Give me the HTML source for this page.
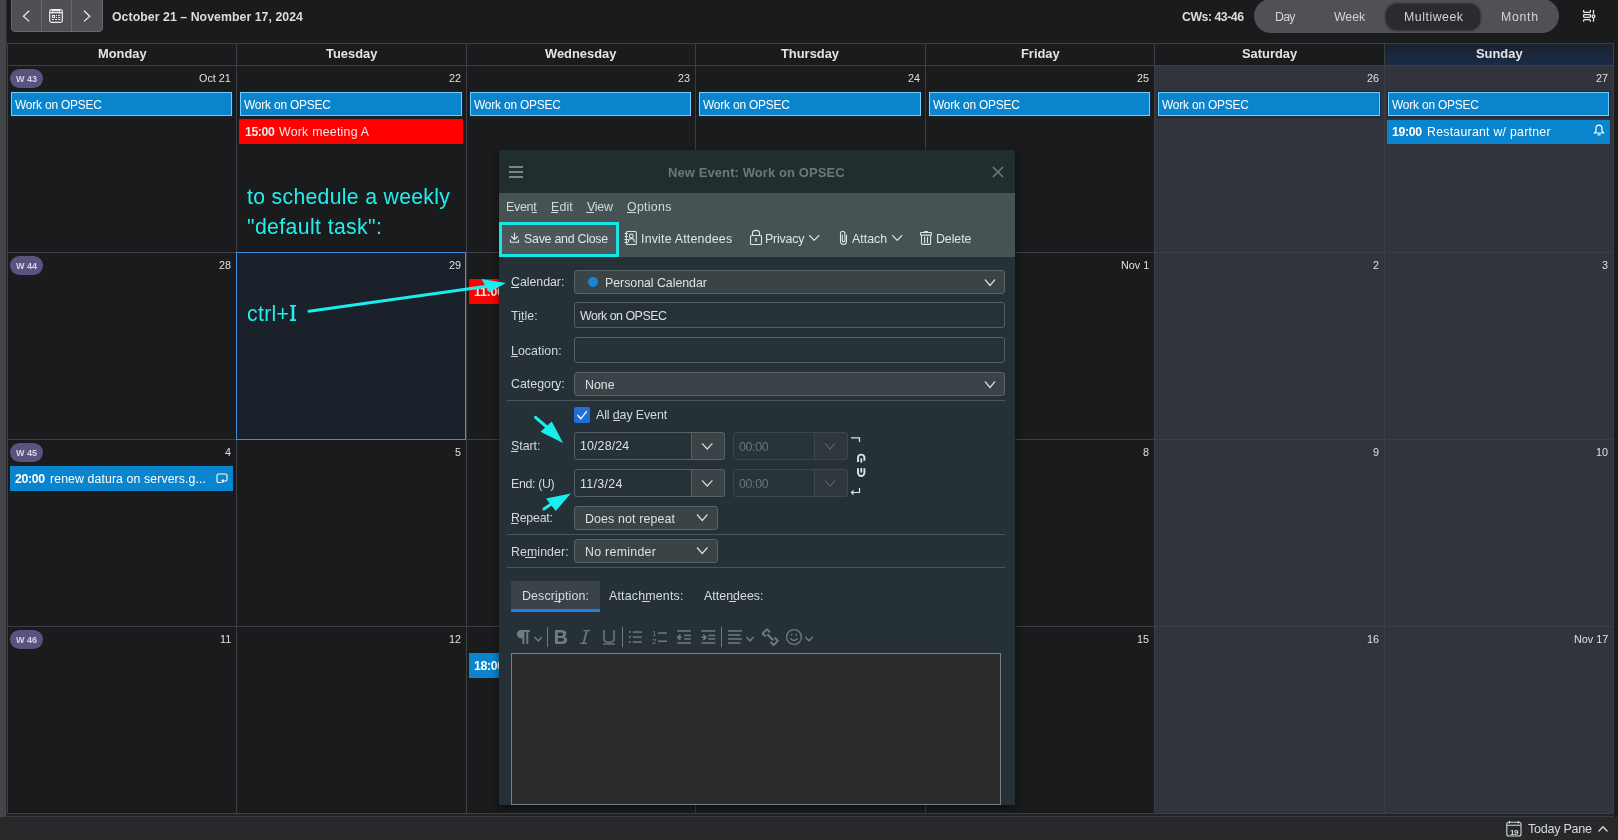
<!DOCTYPE html>
<html><head><meta charset="utf-8"><title>Calendar</title>
<style>
html,body{margin:0;padding:0;}
body{-webkit-font-smoothing:antialiased;width:1618px;height:840px;overflow:hidden;position:relative;background:#1a1b1d;font-family:"Liberation Sans",sans-serif;}
.t{position:absolute;white-space:pre;line-height:1;will-change:transform;}
.r{position:absolute;box-sizing:border-box;}
svg{position:absolute;overflow:visible;}
</style></head><body>
<div class="r" style="left:0px;top:0px;width:6px;height:817px;background:#444548;"></div>
<div class="r" style="left:6px;top:0px;width:1px;height:817px;background:#2a2b2d;"></div>
<div class="r" style="left:0px;top:817px;width:1618px;height:23px;background:#27282a;"></div>
<div class="r" style="left:1155px;top:66px;width:458px;height:747px;background:#31343d;"></div>
<div class="r" style="left:1385px;top:44px;width:228px;height:21px;background:linear-gradient(#1b222d,#1a2b47);"></div>
<div class="r" style="left:7px;top:816px;width:1607px;height:1px;background:#3a3b3e;"></div>
<div class="r" style="left:7px;top:814px;width:1607px;height:2px;background:#222325;"></div>
<div class="r" style="left:7px;top:43px;width:1px;height:771px;background:#3d3e42;"></div>
<div class="r" style="left:236px;top:43px;width:1px;height:771px;background:#3d3e42;"></div>
<div class="r" style="left:466px;top:43px;width:1px;height:771px;background:#3d3e42;"></div>
<div class="r" style="left:695px;top:43px;width:1px;height:771px;background:#3d3e42;"></div>
<div class="r" style="left:925px;top:43px;width:1px;height:771px;background:#3d3e42;"></div>
<div class="r" style="left:1154px;top:43px;width:1px;height:771px;background:#3d3e42;"></div>
<div class="r" style="left:1384px;top:43px;width:1px;height:771px;background:#3d3e42;"></div>
<div class="r" style="left:1613px;top:43px;width:1px;height:771px;background:#3d3e42;"></div>
<div class="r" style="left:7px;top:43px;width:1607px;height:1px;background:#3d3e42;"></div>
<div class="r" style="left:7px;top:65px;width:1607px;height:1px;background:#3d3e42;"></div>
<div class="r" style="left:7px;top:252px;width:1607px;height:1px;background:#3d3e42;"></div>
<div class="r" style="left:7px;top:439px;width:1607px;height:1px;background:#3d3e42;"></div>
<div class="r" style="left:7px;top:626px;width:1607px;height:1px;background:#3d3e42;"></div>
<div class="r" style="left:7px;top:813px;width:1607px;height:1px;background:#3d3e42;"></div>
<div class="r" style="left:11px;top:-4px;width:92px;height:36px;background:#504f54;border:1px solid #68676c;border-radius:4px;"></div>
<div class="r" style="left:41px;top:0px;width:1px;height:32px;background:#6a696e;"></div>
<div class="r" style="left:71px;top:0px;width:1px;height:32px;background:#6a696e;"></div>
<svg style="left:0;top:0" width="1618" height="40"><g fill="none" stroke="#ececec" stroke-width="1.2"><path d="M29.2 10.8 L23.4 16.2 L29.2 21.4"/><path d="M84 10.8 L89.8 16.2 L84 21.4"/><rect x="49.7" y="9.6" width="12.6" height="12.8" rx="1.8"/><path d="M50 12.6 H62 M51.8 10.6 H60.2"/><path d="M52.5 11.2 V13.6 M59.4 11.2 V13.6"/><rect x="52.4" y="15.5" width="2.2" height="1.9" stroke-width="1"/></g><g fill="#ececec"><rect x="56" y="14.9" width="1" height="1"/><rect x="56" y="17" width="1" height="1"/><rect x="58.2" y="14.9" width="2" height="1"/><rect x="58.2" y="17" width="2" height="1"/><rect x="52" y="19" width="2" height="1"/><rect x="55" y="19" width="2" height="1"/><rect x="58.2" y="19" width="2" height="1"/></g></svg>
<div class="t" style="left:112.00px;top:11px;font-size:12.30px;font-weight:700;color:#dcdcdd;letter-spacing:0.056px;">October 21 – November 17, 2024</div>
<div class="t" style="left:1182.00px;top:11px;font-size:12.30px;font-weight:700;color:#dcdcdd;letter-spacing:-0.477px;">CWs: 43-46</div>
<div class="r" style="left:1254px;top:-1px;width:305px;height:34px;background:#515055;border-radius:17px;"></div>
<div class="r" style="left:1386px;top:4px;width:94px;height:26px;background:#2a2b30;border-radius:11px;box-shadow:0 0 2px 1px rgba(30,31,35,0.6);"></div>
<div class="t" style="left:1274.50px;top:11px;font-size:12.30px;font-weight:400;color:#d4d4d6;letter-spacing:-0.682px;">Day</div>
<div class="t" style="left:1333.50px;top:11px;font-size:12.30px;font-weight:400;color:#d4d4d6;letter-spacing:-0.014px;">Week</div>
<div class="t" style="left:1403.50px;top:11px;font-size:12.30px;font-weight:400;color:#d4d4d6;letter-spacing:0.537px;">Multiweek</div>
<div class="t" style="left:1501.00px;top:11px;font-size:12.30px;font-weight:400;color:#d4d4d6;letter-spacing:0.701px;">Month</div>
<svg style="left:0;top:0" width="1618" height="40"><g fill="none" stroke="#e6e6e6" stroke-width="1.3"><path d="M1583.6 10 V11.4 Q1583.6 12.4 1584.6 12.4 H1589.4 Q1590.4 12.4 1590.4 11.4 V10 M1583.6 21.8 V20.6 Q1583.6 19.6 1584.6 19.6 H1589.4 Q1590.4 19.6 1590.4 20.6 V21.8 M1593.5 10 V13.8 M1593.5 17.7 V21.8"/><rect x="1583.6" y="14.6" width="6.8" height="2.8" rx="0.8"/><circle cx="1593.5" cy="16.2" r="1.4"/></g></svg>
<div class="t" style="left:97.64px;top:48px;font-size:12.90px;font-weight:700;color:#e4e4e6;">Monday</div>
<div class="t" style="left:325.81px;top:48px;font-size:12.90px;font-weight:700;color:#e4e4e6;">Tuesday</div>
<div class="t" style="left:545.27px;top:48px;font-size:12.90px;font-weight:700;color:#e4e4e6;">Wednesday</div>
<div class="t" style="left:781.48px;top:48px;font-size:12.90px;font-weight:700;color:#e4e4e6;">Thursday</div>
<div class="t" style="left:1020.65px;top:48px;font-size:12.90px;font-weight:700;color:#e4e4e6;">Friday</div>
<div class="t" style="left:1241.89px;top:48px;font-size:12.90px;font-weight:700;color:#e4e4e6;">Saturday</div>
<div class="t" style="left:1475.70px;top:48px;font-size:12.90px;font-weight:700;color:#e4e4e6;">Sunday</div>
<div class="r" style="left:236px;top:252px;width:230px;height:188px;background:#1a212b;border:1px solid #3d8fe0;"></div>
<div class="t" style="left:199.19px;top:73px;font-size:10.80px;font-weight:400;color:#e0e0e2;">Oct 21</div>
<div class="t" style="left:448.99px;top:73px;font-size:10.80px;font-weight:400;color:#e0e0e2;">22</div>
<div class="t" style="left:677.99px;top:73px;font-size:10.80px;font-weight:400;color:#e0e0e2;">23</div>
<div class="t" style="left:907.99px;top:73px;font-size:10.80px;font-weight:400;color:#e0e0e2;">24</div>
<div class="t" style="left:1136.98px;top:73px;font-size:10.80px;font-weight:400;color:#e0e0e2;">25</div>
<div class="t" style="left:1366.98px;top:73px;font-size:10.80px;font-weight:400;color:#e0e0e2;">26</div>
<div class="t" style="left:1595.98px;top:73px;font-size:10.80px;font-weight:400;color:#e0e0e2;">27</div>
<div class="r" style="left:10px;top:69px;width:33px;height:19px;background:#5a5380;border-radius:10px;"></div>
<div class="t" style="left:15.99px;top:75px;font-size:9.00px;font-weight:700;color:#d6d2e4;">W 43</div>
<div class="t" style="left:218.99px;top:260px;font-size:10.80px;font-weight:400;color:#e0e0e2;">28</div>
<div class="t" style="left:448.99px;top:260px;font-size:10.80px;font-weight:400;color:#e0e0e2;">29</div>
<div class="t" style="left:677.99px;top:260px;font-size:10.80px;font-weight:400;color:#e0e0e2;">30</div>
<div class="t" style="left:907.99px;top:260px;font-size:10.80px;font-weight:400;color:#e0e0e2;">31</div>
<div class="t" style="left:1120.79px;top:260px;font-size:10.80px;font-weight:400;color:#e0e0e2;">Nov 1</div>
<div class="t" style="left:1373.01px;top:260px;font-size:10.80px;font-weight:400;color:#e0e0e2;">2</div>
<div class="t" style="left:1602.01px;top:260px;font-size:10.80px;font-weight:400;color:#e0e0e2;">3</div>
<div class="r" style="left:10px;top:256px;width:33px;height:19px;background:#5a5380;border-radius:10px;"></div>
<div class="t" style="left:15.99px;top:262px;font-size:9.00px;font-weight:700;color:#d6d2e4;">W 44</div>
<div class="t" style="left:225.01px;top:447px;font-size:10.80px;font-weight:400;color:#e0e0e2;">4</div>
<div class="t" style="left:455.01px;top:447px;font-size:10.80px;font-weight:400;color:#e0e0e2;">5</div>
<div class="t" style="left:684.01px;top:447px;font-size:10.80px;font-weight:400;color:#e0e0e2;">6</div>
<div class="t" style="left:914.01px;top:447px;font-size:10.80px;font-weight:400;color:#e0e0e2;">7</div>
<div class="t" style="left:1143.01px;top:447px;font-size:10.80px;font-weight:400;color:#e0e0e2;">8</div>
<div class="t" style="left:1373.01px;top:447px;font-size:10.80px;font-weight:400;color:#e0e0e2;">9</div>
<div class="t" style="left:1595.98px;top:447px;font-size:10.80px;font-weight:400;color:#e0e0e2;">10</div>
<div class="r" style="left:10px;top:443px;width:33px;height:19px;background:#5a5380;border-radius:10px;"></div>
<div class="t" style="left:15.99px;top:449px;font-size:9.00px;font-weight:700;color:#d6d2e4;">W 45</div>
<div class="t" style="left:219.79px;top:634px;font-size:10.80px;font-weight:400;color:#e0e0e2;">11</div>
<div class="t" style="left:448.99px;top:634px;font-size:10.80px;font-weight:400;color:#e0e0e2;">12</div>
<div class="t" style="left:677.99px;top:634px;font-size:10.80px;font-weight:400;color:#e0e0e2;">13</div>
<div class="t" style="left:907.99px;top:634px;font-size:10.80px;font-weight:400;color:#e0e0e2;">14</div>
<div class="t" style="left:1136.98px;top:634px;font-size:10.80px;font-weight:400;color:#e0e0e2;">15</div>
<div class="t" style="left:1366.98px;top:634px;font-size:10.80px;font-weight:400;color:#e0e0e2;">16</div>
<div class="t" style="left:1573.79px;top:634px;font-size:10.80px;font-weight:400;color:#e0e0e2;">Nov 17</div>
<div class="r" style="left:10px;top:630px;width:33px;height:19px;background:#5a5380;border-radius:10px;"></div>
<div class="t" style="left:15.99px;top:636px;font-size:9.00px;font-weight:700;color:#d6d2e4;">W 46</div>
<div class="r" style="left:10px;top:91px;width:223px;height:27px;border:1px solid rgba(8,40,70,0.8);"></div>
<div class="r" style="left:11px;top:92px;width:221px;height:24px;background:#0a84cc;border:1px solid #72ccff;"></div>
<div class="t" style="left:15.30px;top:100px;font-size:11.90px;font-weight:400;color:#ffffff;letter-spacing:-0.173px;">Work on OPSEC</div>
<div class="r" style="left:239px;top:91px;width:224px;height:27px;border:1px solid rgba(8,40,70,0.8);"></div>
<div class="r" style="left:240px;top:92px;width:222px;height:24px;background:#0a84cc;border:1px solid #72ccff;"></div>
<div class="t" style="left:244.30px;top:100px;font-size:11.90px;font-weight:400;color:#ffffff;letter-spacing:-0.173px;">Work on OPSEC</div>
<div class="r" style="left:469px;top:91px;width:223px;height:27px;border:1px solid rgba(8,40,70,0.8);"></div>
<div class="r" style="left:470px;top:92px;width:221px;height:24px;background:#0a84cc;border:1px solid #72ccff;"></div>
<div class="t" style="left:474.30px;top:100px;font-size:11.90px;font-weight:400;color:#ffffff;letter-spacing:-0.173px;">Work on OPSEC</div>
<div class="r" style="left:698px;top:91px;width:224px;height:27px;border:1px solid rgba(8,40,70,0.8);"></div>
<div class="r" style="left:699px;top:92px;width:222px;height:24px;background:#0a84cc;border:1px solid #72ccff;"></div>
<div class="t" style="left:703.30px;top:100px;font-size:11.90px;font-weight:400;color:#ffffff;letter-spacing:-0.173px;">Work on OPSEC</div>
<div class="r" style="left:928px;top:91px;width:223px;height:27px;border:1px solid rgba(8,40,70,0.8);"></div>
<div class="r" style="left:929px;top:92px;width:221px;height:24px;background:#0a84cc;border:1px solid #72ccff;"></div>
<div class="t" style="left:933.30px;top:100px;font-size:11.90px;font-weight:400;color:#ffffff;letter-spacing:-0.173px;">Work on OPSEC</div>
<div class="r" style="left:1157px;top:91px;width:224px;height:27px;border:1px solid rgba(8,40,70,0.8);"></div>
<div class="r" style="left:1158px;top:92px;width:222px;height:24px;background:#0a84cc;border:1px solid #72ccff;"></div>
<div class="t" style="left:1162.30px;top:100px;font-size:11.90px;font-weight:400;color:#ffffff;letter-spacing:-0.173px;">Work on OPSEC</div>
<div class="r" style="left:1387px;top:91px;width:223px;height:27px;border:1px solid rgba(8,40,70,0.8);"></div>
<div class="r" style="left:1388px;top:92px;width:221px;height:24px;background:#0a84cc;border:1px solid #72ccff;"></div>
<div class="t" style="left:1392.30px;top:100px;font-size:11.90px;font-weight:400;color:#ffffff;letter-spacing:-0.173px;">Work on OPSEC</div>
<div class="r" style="left:239px;top:119px;width:224px;height:25px;background:#ff0000;"></div>
<div class="t" style="left:245.00px;top:126px;font-size:12.30px;font-weight:700;color:#f6e8e8;letter-spacing:-0.414px;">15:00</div>
<div class="t" style="left:279.40px;top:126px;font-size:12.30px;font-weight:400;color:#f6e8e8;letter-spacing:0.262px;">Work meeting A</div>
<div class="r" style="left:1387px;top:120px;width:223px;height:24px;background:#0a84cc;"></div>
<div class="t" style="left:1392.00px;top:126px;font-size:12.30px;font-weight:700;color:#ffffff;letter-spacing:-0.364px;">19:00</div>
<div class="t" style="left:1426.80px;top:126px;font-size:12.30px;font-weight:400;color:#ffffff;letter-spacing:0.262px;">Restaurant w/ partner</div>
<svg style="left:0;top:0" width="1618" height="840"><g fill="none" stroke="#ffffff" stroke-width="1.2"><path d="M1594.5 133 H1603.5 L1602 131 V128.5 A3 3.3 0 0 0 1596 128.5 V131 Z"/><path d="M1597.5 134.8 H1600.5"/></g></svg>
<div class="r" style="left:469px;top:279px;width:40px;height:25px;background:#ff0000;"></div>
<div class="t" style="left:474.00px;top:286px;font-size:12.30px;font-weight:700;color:#f6e8e8;letter-spacing:-0.195px;">11:00</div>
<div class="r" style="left:10px;top:466px;width:223px;height:25px;background:#0a84cc;"></div>
<div class="t" style="left:14.90px;top:473px;font-size:12.30px;font-weight:700;color:#ffffff;letter-spacing:-0.364px;">20:00</div>
<div class="t" style="left:50.00px;top:473px;font-size:12.30px;font-weight:400;color:#ffffff;letter-spacing:0.106px;">renew datura on servers.g...</div>
<svg style="left:0;top:0" width="1618" height="840"><g fill="none" stroke="#ffffff" stroke-width="1.1"><path d="M221.5 482.5 H218.5 A1.5 1.5 0 0 1 217 481 V475.5 A1.5 1.5 0 0 1 218.5 474 H225.5 A1.5 1.5 0 0 1 227 475.5 V479.5 A1.5 1.5 0 0 1 225.5 481 H222.5 M223.5 479.5 L222 481 L223.5 482.5"/></g></svg>
<div class="r" style="left:469px;top:653px;width:40px;height:25px;background:#0a84cc;"></div>
<div class="t" style="left:474.00px;top:660px;font-size:12.30px;font-weight:700;color:#ffffff;letter-spacing:-0.364px;">18:00</div>
<div class="t" style="left:246.80px;top:186px;font-size:21.20px;font-weight:400;color:#22efec;letter-spacing:0.327px;">to schedule a weekly</div>
<div class="t" style="left:246.80px;top:216px;font-size:21.20px;font-weight:400;color:#22efec;letter-spacing:0.402px;">&quot;default task&quot;:</div>
<div class="t" style="left:246.60px;top:303px;font-size:21.20px;font-weight:400;color:#22efec;letter-spacing:0.337px;">ctrl+</div>
<svg style="left:0;top:0" width="1618" height="840"><path d="M290 305 H296 V306.6 H294.3 V319.3 H296 V321 H290 V319.3 H291.7 V306.6 H290 Z" fill="#22efec"/></svg>
<div class="t" style="left:1527.60px;top:823px;font-size:12.60px;font-weight:400;color:#d6d9da;letter-spacing:-0.273px;">Today Pane</div>
<svg style="left:0;top:0" width="1618" height="840"><g fill="none" stroke="#d6d9da" stroke-width="1.1"><rect x="1506.8" y="822.2" width="14.2" height="13.8" rx="2"/><path d="M1507 825.3 H1520.8 M1509.5 821 V823.5 M1518.3 821 V823.5"/><path d="M1598.5 831.5 L1603 826.8 L1607.5 831.5" stroke-width="1.3"/></g></svg>
<div class="t" style="left:1510.00px;top:829px;font-size:8.00px;font-weight:700;color:#d6d9da;letter-spacing:-0.400px;">19</div>
<div class="r" style="left:499px;top:150px;width:516px;height:655px;box-shadow:0 3px 7px 1px rgba(0,0,0,0.42);"></div>
<div class="r" style="left:499px;top:150px;width:516px;height:655px;background:#253137;border-radius:3px 3px 0 0;overflow:hidden;"></div>
<div class="r" style="left:499px;top:150px;width:516px;height:43px;background:#212e30;border-radius:3px 3px 0 0;"></div>
<div class="t" style="left:668.40px;top:166px;font-size:13.00px;font-weight:700;color:#6c797b;letter-spacing:0.089px;">New Event: Work on OPSEC</div>
<svg style="left:0;top:0" width="1618" height="840"><g fill="#7a8486"><rect x="509" y="166" width="14" height="2"/><rect x="509" y="171" width="14" height="2"/><rect x="509" y="176" width="14" height="2"/></g><g stroke="#6f7a7b" stroke-width="1.6" fill="none"><path d="M993 167 L1003 177 M1003 167 L993 177"/></g></svg>
<div class="r" style="left:499px;top:193px;width:516px;height:64px;background:#465355;"></div>
<div class="t" style="left:506.00px;top:201px;font-size:12.40px;font-weight:400;color:#d3d9da;letter-spacing:-0.253px;">Event</div>
<div class="r" style="left:532px;top:212px;width:5px;height:1px;background:#d3d9da;"></div>
<div class="t" style="left:551.00px;top:201px;font-size:12.40px;font-weight:400;color:#d3d9da;letter-spacing:0.147px;">Edit</div>
<div class="r" style="left:551px;top:212px;width:7px;height:1px;background:#d3d9da;"></div>
<div class="t" style="left:586.80px;top:201px;font-size:12.40px;font-weight:400;color:#d3d9da;letter-spacing:-0.230px;">View</div>
<div class="r" style="left:586px;top:212px;width:8px;height:1px;background:#d3d9da;"></div>
<div class="t" style="left:626.80px;top:201px;font-size:12.40px;font-weight:400;color:#d3d9da;letter-spacing:0.275px;">Options</div>
<div class="r" style="left:627px;top:212px;width:9px;height:1px;background:#d3d9da;"></div>
<div class="r" style="left:502px;top:225px;width:114px;height:30px;background:#4d575a;"></div>
<div class="r" style="left:499px;top:222px;width:120px;height:35px;border:3px solid #14e6e6;"></div>
<div class="t" style="left:524.00px;top:233px;font-size:12.40px;font-weight:400;color:#dfe5e6;letter-spacing:-0.257px;">Save and Close</div>
<div class="t" style="left:641.00px;top:233px;font-size:12.40px;font-weight:400;color:#dfe5e6;letter-spacing:0.196px;">Invite Attendees</div>
<div class="t" style="left:765.30px;top:233px;font-size:12.40px;font-weight:400;color:#dfe5e6;letter-spacing:-0.207px;">Privacy</div>
<div class="t" style="left:851.90px;top:233px;font-size:12.40px;font-weight:400;color:#dfe5e6;letter-spacing:0.009px;">Attach</div>
<div class="t" style="left:935.60px;top:233px;font-size:12.40px;font-weight:400;color:#dfe5e6;letter-spacing:-0.087px;">Delete</div>
<svg style="left:0;top:0" width="1618" height="840"><g fill="none" stroke="#dfe5e6" stroke-width="1.1" stroke-linecap="round" stroke-linejoin="round"><path d="M514.5 233 V239.5 M511.5 236.5 L514.5 239.5 L517.5 236.5 M510.5 240 V242.3 H518.5 V240"/><rect x="626.3" y="231.5" width="10" height="13" rx="1"/><path d="M625 233.5 H627.5 M625 236.5 H627.5 M625 239.5 H627.5 M625 242.5 H627.5"/><circle cx="631.3" cy="236" r="1.9"/><path d="M628.5 241.8 V240.6 Q628.5 238.6 631.3 238.6 Q634.1 238.6 634.1 240.6 V241.8"/><rect x="750.5" y="235.5" width="11" height="9" rx="1"/><path d="M752.5 235.5 V233 Q752.5 230.4 756 230.4 Q759.5 230.4 759.5 233 V235.5"/><path d="M756 238.5 V241" stroke-width="1.4"/><path d="M809.5 235.5 L814.2 240.3 L818.9 235.5"/><path d="M846.5 235 V241 Q846.5 244.4 843.5 244.4 Q840.5 244.4 840.5 241 V234 Q840.5 231.3 842.7 231.3 Q844.9 231.3 844.9 234 V240.5 Q844.9 241.8 843.6 241.8 Q842.3 241.8 842.3 240.5 V235"/><path d="M892.6 235.5 L897.2 240.3 L901.8 235.5"/><rect x="920.5" y="232.5" width="11" height="2.6" rx="0.8"/><path d="M924.5 232.5 V231.5 H927.5 V232.5"/><path d="M921.5 235.3 V243.6 Q921.5 244.4 922.3 244.4 H929.8 Q930.6 244.4 930.6 243.6 V235.3 M924.6 237 V242.5 M927.5 237 V242.5"/></g></svg>
<div class="t" style="left:511.30px;top:276px;font-size:12.40px;font-weight:400;color:#d3d9da;letter-spacing:-0.044px;">Calendar:</div>
<div class="r" style="left:511px;top:287px;width:8px;height:1px;background:#d3d9da;"></div>
<div class="r" style="left:574px;top:270px;width:431px;height:24px;background:#3a4447;border:1px solid #596468;border-radius:3px;"></div>
<svg style="left:0;top:0" width="1618" height="840"><circle cx="593" cy="282" r="5" fill="#1a84d6"/></svg>
<div class="t" style="left:604.70px;top:277px;font-size:12.40px;font-weight:400;color:#dbe0e1;letter-spacing:-0.044px;">Personal Calendar</div>
<div class="t" style="left:511.30px;top:310px;font-size:12.40px;font-weight:400;color:#d3d9da;letter-spacing:0.058px;">Title:</div>
<div class="r" style="left:519px;top:321px;width:4px;height:1px;background:#d3d9da;"></div>
<div class="r" style="left:574px;top:302px;width:431px;height:26px;background:#273237;border:1px solid #566166;border-radius:3px;"></div>
<div class="t" style="left:579.70px;top:310px;font-size:12.40px;font-weight:400;color:#dbe0e1;letter-spacing:-0.485px;">Work on OPSEC</div>
<div class="t" style="left:511.30px;top:345px;font-size:12.40px;font-weight:400;color:#d3d9da;letter-spacing:0.045px;">Location:</div>
<div class="r" style="left:511px;top:356px;width:7px;height:1px;background:#d3d9da;"></div>
<div class="r" style="left:574px;top:337px;width:431px;height:26px;background:#273237;border:1px solid #566166;border-radius:3px;"></div>
<div class="t" style="left:511.30px;top:378px;font-size:12.40px;font-weight:400;color:#d3d9da;letter-spacing:-0.007px;">Category:</div>
<div class="r" style="left:553px;top:389px;width:6px;height:1px;background:#d3d9da;"></div>
<div class="r" style="left:574px;top:372px;width:431px;height:24px;background:#3a4447;border:1px solid #596468;border-radius:3px;"></div>
<div class="t" style="left:584.70px;top:379px;font-size:12.40px;font-weight:400;color:#dbe0e1;letter-spacing:-0.012px;">None</div>
<div class="r" style="left:507px;top:400px;width:498px;height:1px;background:#4a555a;"></div>
<div class="r" style="left:574px;top:407px;width:16px;height:16px;background:#1f6fd6;border-radius:2px;"></div>
<svg style="left:0;top:0" width="1618" height="840"><path d="M577.5 415 L580.8 418.8 L586.8 411.2" fill="none" stroke="#ffffff" stroke-width="1.3"/></svg>
<div class="t" style="left:596.30px;top:409px;font-size:12.40px;font-weight:400;color:#d3d9da;letter-spacing:-0.099px;">All day Event</div>
<div class="r" style="left:613px;top:420px;width:7px;height:1px;background:#d3d9da;"></div>
<div class="t" style="left:511.30px;top:440px;font-size:12.40px;font-weight:400;color:#d3d9da;letter-spacing:-0.027px;">Start:</div>
<div class="r" style="left:511px;top:451px;width:7px;height:1px;background:#d3d9da;"></div>
<div class="r" style="left:574px;top:432px;width:151px;height:28px;background:#273237;border:1px solid #566166;border-radius:3px;"></div>
<div class="r" style="left:691px;top:432px;width:34px;height:28px;background:#3a4447;border:1px solid #566166;border-left:1px solid #566166;border-radius:0 3px 3px 0;"></div>
<div class="t" style="left:580.00px;top:440px;font-size:12.40px;font-weight:400;color:#dbe0e1;letter-spacing:0.133px;">10/28/24</div>
<div class="r" style="left:733px;top:432px;width:115px;height:28px;background:#29333a;border:1px solid #3c464c;border-radius:3px;"></div>
<div class="r" style="left:814px;top:432px;width:34px;height:28px;background:#2d373c;border:1px solid #3c464c;border-radius:0 3px 3px 0;"></div>
<div class="t" style="left:738.70px;top:441px;font-size:12.40px;font-weight:400;color:#6b7477;letter-spacing:-0.333px;">00:00</div>
<div class="t" style="left:511.30px;top:478px;font-size:12.40px;font-weight:400;color:#d3d9da;letter-spacing:-0.351px;">End: (U)</div>
<div class="r" style="left:574px;top:469px;width:151px;height:28px;background:#273237;border:1px solid #566166;border-radius:3px;"></div>
<div class="r" style="left:691px;top:469px;width:34px;height:28px;background:#3a4447;border:1px solid #566166;border-left:1px solid #566166;border-radius:0 3px 3px 0;"></div>
<div class="t" style="left:580.00px;top:478px;font-size:12.40px;font-weight:400;color:#dbe0e1;letter-spacing:0.341px;">11/3/24</div>
<div class="r" style="left:733px;top:469px;width:115px;height:28px;background:#29333a;border:1px solid #3c464c;border-radius:3px;"></div>
<div class="r" style="left:814px;top:469px;width:34px;height:28px;background:#2d373c;border:1px solid #3c464c;border-radius:0 3px 3px 0;"></div>
<div class="t" style="left:738.70px;top:478px;font-size:12.40px;font-weight:400;color:#6b7477;letter-spacing:-0.333px;">00:00</div>
<svg style="left:0;top:0" width="1618" height="840"><g fill="none" stroke="#dfe4e5" stroke-width="1.2"><path d="M851 437.8 H859.5 V442"/><path d="M859.5 488 V492.5 H851.5 M853.5 490.5 L851.5 492.5 L853.5 494.5"/></g><g fill="none" stroke="#dfe4e5" stroke-width="1.9"><path d="M858 462 V457.8 A3.2 3.2 0 0 1 864.4 457.8 V460.8"/><path d="M858 468.2 V472.8 A3.2 3.2 0 0 0 864.4 472.8 V468.2"/></g><g fill="#dfe4e5"><rect x="860.4" y="458.3" width="1.8" height="4.3"/><rect x="860.4" y="468" width="1.8" height="4.6"/></g></svg>
<div class="t" style="left:511.30px;top:512px;font-size:12.40px;font-weight:400;color:#d3d9da;letter-spacing:-0.238px;">Repeat:</div>
<div class="r" style="left:511px;top:523px;width:7px;height:1px;background:#d3d9da;"></div>
<div class="r" style="left:574px;top:506px;width:144px;height:24px;background:#3a4447;border:1px solid #596468;border-radius:3px;"></div>
<div class="t" style="left:584.70px;top:513px;font-size:12.40px;font-weight:400;color:#dbe0e1;letter-spacing:0.127px;">Does not repeat</div>
<div class="r" style="left:507px;top:534px;width:498px;height:1px;background:#4a555a;"></div>
<div class="t" style="left:511.20px;top:546px;font-size:12.40px;font-weight:400;color:#d3d9da;letter-spacing:0.063px;">Reminder:</div>
<div class="r" style="left:525px;top:557px;width:11px;height:1px;background:#d3d9da;"></div>
<div class="r" style="left:574px;top:539px;width:144px;height:24px;background:#3a4447;border:1px solid #596468;border-radius:3px;"></div>
<div class="t" style="left:584.80px;top:546px;font-size:12.40px;font-weight:400;color:#dbe0e1;letter-spacing:0.267px;">No reminder</div>
<div class="r" style="left:507px;top:567px;width:498px;height:1px;background:#4a555a;"></div>
<div class="r" style="left:511px;top:581px;width:89px;height:31px;background:#3a4448;"></div>
<div class="r" style="left:511px;top:609px;width:89px;height:3px;background:#1d7fe0;"></div>
<div class="t" style="left:521.60px;top:590px;font-size:12.40px;font-weight:400;color:#d6dcdd;letter-spacing:0.139px;">Description:</div>
<div class="r" style="left:554px;top:601px;width:7px;height:1px;background:#d6dcdd;"></div>
<div class="t" style="left:609.00px;top:590px;font-size:12.40px;font-weight:400;color:#d6dcdd;letter-spacing:0.186px;">Attachments:</div>
<div class="r" style="left:642px;top:601px;width:8px;height:1px;background:#d6dcdd;"></div>
<div class="t" style="left:704.20px;top:590px;font-size:12.40px;font-weight:400;color:#d6dcdd;letter-spacing:0.033px;">Attendees:</div>
<div class="r" style="left:729px;top:601px;width:7px;height:1px;background:#d6dcdd;"></div>
<svg style="left:0;top:0" width="1618" height="840"><g fill="#6e7b80"><path d="M521 630 H529.8 V632 H528.3 V644 H526.3 V632 H524.4 V644 H522.4 V638.3 H521 A4.15 4.15 0 0 1 521 630 Z"/><rect x="547" y="627" width="1" height="20"/><rect x="622" y="627" width="1" height="20"/><rect x="721" y="627" width="1" height="20"/><path d="M555 630 H561.5 Q566.3 630 566.3 633.5 Q566.3 636 564.3 636.8 Q567.2 637.6 567.2 640.3 Q567.2 644 562 644 H555 Z M557.9 632.4 V635.9 H561.2 Q563.3 635.9 563.3 634.1 Q563.3 632.4 561.2 632.4 Z M557.9 638.1 V641.6 H561.7 Q564.1 641.6 564.1 639.8 Q564.1 638.1 561.7 638.1 Z"/><path d="M583.5 630 H590 V631.2 H587.6 L584.5 642.8 H586.8 V644 H580.3 V642.8 H582.7 L585.8 631.2 H583.5 Z"/><circle cx="629.8" cy="632" r="1.1"/><circle cx="629.8" cy="637" r="1.1"/><circle cx="629.8" cy="642" r="1.1"/><rect x="632.8" y="631.3" width="9" height="1.5"/><rect x="632.8" y="636.3" width="9" height="1.5"/><rect x="632.8" y="641.3" width="9" height="1.5"/><rect x="658" y="632.3" width="9" height="1.5"/><rect x="658" y="640.5" width="9" height="1.5"/><rect x="677" y="630.2" width="14" height="1.5"/><rect x="684" y="634.7" width="7" height="1.5"/><rect x="684" y="638.2" width="7" height="1.5"/><rect x="677" y="642.3" width="14" height="1.5"/><rect x="701.2" y="630.2" width="14" height="1.5"/><rect x="708.2" y="634.7" width="7" height="1.5"/><rect x="708.2" y="638.2" width="7" height="1.5"/><rect x="701.2" y="642.3" width="14" height="1.5"/><rect x="728" y="630.2" width="14" height="1.5"/><rect x="728" y="634.2" width="12.5" height="1.5"/><rect x="728" y="638.2" width="14" height="1.5"/><rect x="728" y="642.3" width="12.5" height="1.5"/></g><g fill="none" stroke="#6e7b80" stroke-width="1.5"><path d="M534.5 637 L538.2 640.8 L541.9 637"/><path d="M746.4 637 L750 640.8 L753.6 637"/><path d="M805.3 637 L809 640.8 L812.7 637"/><path d="M604 630 V639 Q604 642.3 609 642.3 Q614 642.3 614 639 V630"/><path d="M682 637.3 H677.8 M680.5 634.5 L677.6 637.3 L680.5 640.1"/><path d="M701.5 637.3 H705.8 M703.2 634.5 L706.1 637.3 L703.2 640.1"/><path d="M770 632.3 L766.8 629.3 L762.6 633.5 L765.8 636.7 M770.4 641.9 L773.6 645 L777.8 640.8 L774.6 637.5" stroke-width="1.9" stroke-linejoin="round"/><path d="M767.2 634.2 L773.2 640.2" stroke-width="2.2"/><circle cx="794" cy="637" r="7.4" stroke-width="1.3"/><path d="M790.3 638.6 Q794 642.2 797.7 638.6" stroke-width="1.4"/></g><g fill="#6e7b80"><rect x="603" y="643.4" width="12" height="1.3"/><circle cx="791.7" cy="634.8" r="0.9"/><circle cx="796.3" cy="634.8" r="0.9"/></g></svg>
<div class="t" style="left:652.30px;top:630px;font-size:8.00px;font-weight:400;color:#6e7b80;">1</div>
<div class="t" style="left:652.30px;top:638px;font-size:8.00px;font-weight:400;color:#6e7b80;">2</div>
<div class="r" style="left:511px;top:653px;width:490px;height:152px;background:#2a2b2d;border:1px solid #788083;"></div>
<svg style="left:0;top:0" width="1618" height="840"><g fill="none"><path d="M985 279.5 L990.0 285.5 L995 279.5" stroke="#d8dddf" stroke-width="1.2"/><path d="M985 381.5 L990.0 387.5 L995 381.5" stroke="#d8dddf" stroke-width="1.2"/><path d="M702 443.3 L707.2 449 L712.4 443.3" stroke="#d8dddf" stroke-width="1.2"/><path d="M825 443.5 L830.0 449 L835 443.5" stroke="#646d70" stroke-width="1.1"/><path d="M702 480.3 L707.2 486 L712.4 480.3" stroke="#d8dddf" stroke-width="1.2"/><path d="M825 480.5 L830.0 486 L835 480.5" stroke="#646d70" stroke-width="1.1"/><path d="M697 514.5 L702.25 520.5 L707.5 514.5" stroke="#d8dddf" stroke-width="1.2"/><path d="M697 547.5 L702.25 553.5 L707.5 547.5" stroke="#d8dddf" stroke-width="1.2"/></g></svg>
<svg style="left:0;top:0" width="1618" height="840"><path d="M309 311.2 L487 286.3" stroke="#18eeee" stroke-width="3" stroke-linecap="round"/><path d="M505.8 283 L481.5 279 L489 292.5 Z" fill="#18eeee"/><path d="M535.5 417.4 L548 428" stroke="#18eeee" stroke-width="3" stroke-linecap="round"/><path d="M563 443 L540.5 431.8 L551.8 421.4 Z" fill="#18eeee"/><path d="M544 509.1 L552 503.5" stroke="#18eeee" stroke-width="3" stroke-linecap="round"/><path d="M570.8 493.4 L546 498.6 L555.8 511 Z" fill="#18eeee"/></svg></body></html>
